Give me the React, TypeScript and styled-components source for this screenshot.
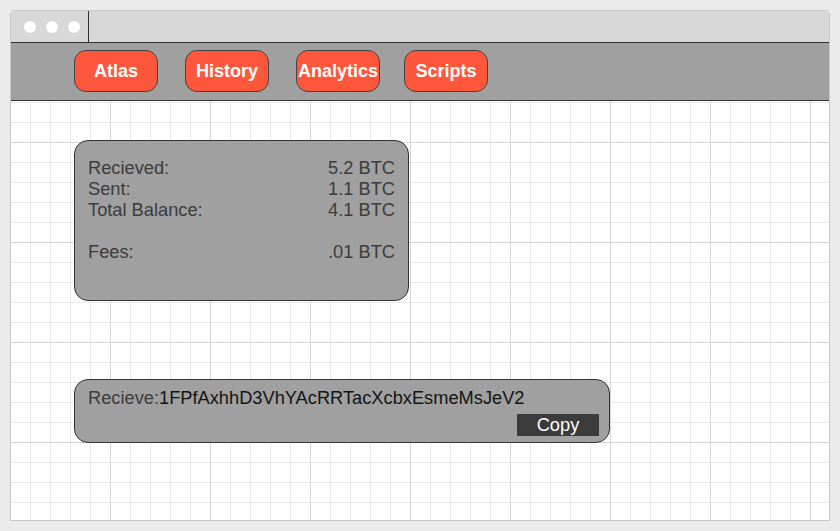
import styled, { createGlobalStyle } from 'styled-components';

const GlobalStyle = createGlobalStyle`
  html, body {
    margin: 0;
    padding: 0;
    background: #ebebeb;
  }
  * {
    box-sizing: border-box;
  }
  #root {
    padding: 10px;
    font-family: "Liberation Sans", Arial, sans-serif;
  }
`;

const tabs = ['Atlas', 'History', 'Analytics', 'Scripts'];

const stats = [
  { label: 'Recieved:', value: '5.2 BTC' },
  { label: 'Sent:', value: '1.1 BTC' },
  { label: 'Total Balance:', value: '4.1 BTC' },
];

const address = '1FPfAxhhD3VhYAcRRTacXcbxEsmeMsJeV2';

const App = () => {
  return (
    <>
      <GlobalStyle />
      <Window>
        <TitleBar>
          <ActiveTab>
            <Dot />
            <Dot />
            <Dot />
          </ActiveTab>
          <TabFiller />
        </TitleBar>
        <Main>
          <NavBar>
            {tabs.map((tab, i) => (
              <NavButton key={tab} type="button" $last={i === tabs.length - 1}>
                {tab}
              </NavButton>
            ))}
          </NavBar>
          <Content>
            <BalanceCard>
              {stats.map((row) => (
                <StatRow key={row.label}>
                  <span>{row.label}</span>
                  <span>{row.value}</span>
                </StatRow>
              ))}
              <Spacer />
              <StatRow>
                <span>Fees:</span>
                <span>.01 BTC</span>
              </StatRow>
            </BalanceCard>
            <AddressCard>
              <AddressLine>
                Recieve:<Address>{address}</Address>
              </AddressLine>
              <CopyButton type="button">Copy</CopyButton>
            </AddressCard>
          </Content>
        </Main>
      </Window>
    </>
  );
};

const Window = styled.div`
  width: 820px;
  height: 511px;
  display: flex;
  flex-direction: column;
  border: 1px solid #c6c6c6;
  border-radius: 4px 4px 0 0;
  background: #fff;
  overflow: hidden;
`;

const TitleBar = styled.div`
  display: flex;
  height: 32px;
  background: #d8d8d8;
  border-bottom: 1px solid #333;
  flex-shrink: 0;
`;

const ActiveTab = styled.div`
  width: 77px;
  display: flex;
  align-items: center;
  gap: 8px;
  padding-left: 12px;
  padding-top: 1px;
`;

const Dot = styled.span`
  width: 14px;
  height: 14px;
  border-radius: 50%;
  background: #fff;
  border: 1px solid #d2d2d2;
`;

const TabFiller = styled.div`
  flex: 1;
  margin-top: -1px;
  border-top: 1px solid #333;
  border-left: 1px solid #333;
`;

const Main = styled.div`
  flex: 1;
  background-color: #fff;
  background-image:
    linear-gradient(to right, #d6d6d6 1px, transparent 1px),
    linear-gradient(to bottom, #d6d6d6 1px, transparent 1px),
    linear-gradient(to right, #e8e8e8 1px, transparent 1px),
    linear-gradient(to bottom, #e8e8e8 1px, transparent 1px);
  background-size: 100px 100px, 100px 100px, 20px 20px, 20px 20px;
  background-position: -1px -1px;
`;

const NavBar = styled.nav`
  display: flex;
  align-items: flex-start;
  gap: 27px;
  height: 58px;
  padding: 7px 0 0 63px;
  background: #a0a0a0;
  border-bottom: 1px solid #333;
`;

const NavButton = styled.button<{ $last?: boolean }>`
  width: 84px;
  height: 42px;
  margin-left: ${(p) => (p.$last ? '-3px' : '0')};
  padding: 0;
  border: 1px solid #444;
  border-radius: 12px;
  background: #ff573b;
  color: #fff;
  font-family: "Liberation Sans", Arial, sans-serif;
  font-size: 18px;
  font-weight: 700;
  cursor: pointer;
`;

const Content = styled.div`
  display: flex;
  flex-direction: column;
  align-items: flex-start;
  gap: 78px;
  padding: 39px 0 0 63px;
`;

const Card = styled.div`
  background: #a0a0a0;
  border: 1px solid #333;
  border-radius: 14px;
  color: #3c3c3c;
  font-size: 18.25px;
  line-height: 21px;
`;

const BalanceCard = styled(Card)`
  width: 335px;
  height: 161px;
  padding: 16px 13px 0 13px;
`;

const StatRow = styled.div`
  display: flex;
  justify-content: space-between;
`;

const Spacer = styled.div`
  height: 21px;
`;

const AddressCard = styled(Card)`
  width: 536px;
  height: 64px;
  display: flex;
  flex-direction: column;
  align-items: stretch;
  padding: 7px 10px 0 13px;
`;

const AddressLine = styled.div`
  white-space: nowrap;
`;

const Address = styled.span`
  color: #141414;
`;

const CopyButton = styled.button`
  align-self: flex-end;
  width: 82px;
  height: 22px;
  margin-top: 6px;
  padding: 0;
  border: none;
  background: #3b3b3b;
  color: #fff;
  font-family: "Liberation Sans", Arial, sans-serif;
  font-size: 18.25px;
  line-height: 22px;
  cursor: pointer;
`;

export default App;
